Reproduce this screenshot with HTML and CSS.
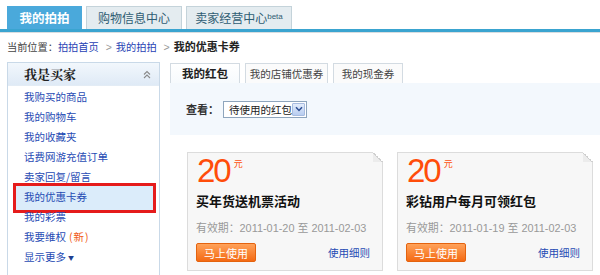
FILE: index.html
```html
<!DOCTYPE html>
<html lang="zh">
<head>
<meta charset="utf-8">
<link rel="stylesheet" href="styles.css">
</head>
<body>
<div class="nav">
  <a class="nav-tab active">我的拍拍</a>
  <a class="nav-tab">购物信息中心</a>
  <a class="nav-tab">卖家经营中心<sup>beta</sup></a>
</div>
<div class="crumb">当前位置：<a>拍拍首页</a><span class="gt">&gt;</span><a>我的拍拍</a><span class="gt">&gt;</span><b>我的优惠卡券</b></div>
<div class="main">
  <div class="side">
    <div class="side-head"><span>我是买家</span><svg class="fold" width="8" height="9" viewBox="0 0 8 9"><path d="M1 4.5 L4 1.5 L7 4.5 M1 8 L4 5 L7 8" fill="none" stroke="#8a8a8a" stroke-width="1.1"/></svg></div>
    <ul class="side-list">
      <li><a>我购买的商品</a></li>
      <li><a>我的购物车</a></li>
      <li><a>我的收藏夹</a></li>
      <li><a>话费网游充值订单</a></li>
      <li><a>卖家回复/留言</a></li>
      <li class="cur"><a>我的优惠卡券</a></li>
      <li><a>我的彩票</a></li>
      <li><a>我要维权</a><span class="new">(新)</span></li>
      <li><a>显示更多</a><span class="tri">▼</span></li>
    </ul>
  </div>
  <div class="content">
    <div class="tabs">
      <span class="tab on">我的红包</span>
      <span class="tab">我的店铺优惠券</span>
      <span class="tab">我的现金券</span>
    </div>
    <div class="filter">
      <span class="label">查看：</span>
      <span class="select"><span class="sel-text">待使用的红包</span><span class="arrow"><svg width="8" height="6" viewBox="0 0 8 6"><path d="M1 1.2 L4 4.4 L7 1.2" fill="none" stroke="#2d4f93" stroke-width="1.5"/></svg></span></span>
    </div>
    <div class="cards">
      <div class="card">
        <div class="amount">20<span class="yuan">元</span></div>
        <div class="title">买年货送机票活动</div>
        <div class="date">有效期：2011-01-20 至 2011-02-03</div>
        <div class="actions"><span class="btn">马上使用</span><a class="rule">使用细则</a></div>
      </div>
      <div class="card">
        <div class="amount">20<span class="yuan">元</span></div>
        <div class="title">彩钻用户每月可领红包</div>
        <div class="date">有效期：2011-01-19 至 2011-02-03</div>
        <div class="actions"><span class="btn">马上使用</span><a class="rule">使用细则</a></div>
      </div>
    </div>
  </div>
</div>
</body>
</html>
```
FILE: styles.css
```css
* { box-sizing: border-box; }
html, body { margin: 0; padding: 0; background: #fff; }
body {
  width: 600px; height: 275px; overflow: hidden;
  font-family: "Noto Sans CJK SC", "Liberation Sans", sans-serif;
  font-size: 10.5px; line-height: 16px; color: #333;
}
a { color: #1f4bb4; text-decoration: none; }

.nav {
  display: flex; gap: 4px; padding: 6px 0 0 7px; height: 32px;
  border-bottom: 3px solid #3aa4d0;
  box-shadow: 0 1px 0 #d8dde0;
}
.nav-tab {
  height: 23px; line-height: 22px; text-align: center;
  background: #e4ecf0; border: 1px solid #c4d3da; border-bottom: 0;
  color: #2f5d73; font-size: 12px; white-space: nowrap;
}
.nav-tab:nth-child(1) { width: 75px; }
.nav-tab:nth-child(2) { width: 96px; }
.nav-tab:nth-child(3) { width: 106px; }
.nav-tab.active {
  background: #4aa9db; border-color: #4aa9db; color: #fff; font-weight: bold; font-size: 12.5px;
}
.nav-tab sup {
  font-size: 8px; font-family: "Liberation Sans", sans-serif; vertical-align: 4px; line-height: 0;
}

.crumb { padding: 6px 0 0 7px; height: 30px; color: #444; white-space: nowrap; font-size: 10.2px; }
.crumb a { color: #1f3fb4; }
.crumb .gt { color: #999; padding: 0 4px 0 7px; font-family: "Liberation Sans", sans-serif; font-size: 10.5px; }
.crumb b { color: #222; font-size: 11px; }

.main { display: flex; padding-left: 7px; gap: 10px; }

.side { width: 153px; height: 213px; border: 1px solid #c9d9e8; border-bottom: 0; }
.side-head {
  height: 23px; display: flex; justify-content: space-between; align-items: center;
  padding: 0 8px 0 16px;
  background: linear-gradient(#f2f7fc, #dfeaf6);
  border-bottom: 1px solid #e3ecf5;
  font-size: 13px; font-weight: bold; color: #222;
  font-family: "Noto Serif CJK SC", "Noto Sans CJK SC", serif;
}
.side-list { list-style: none; margin: 1px 0 0; padding: 0; }
.side-list li { height: 20px; line-height: 20px; padding-left: 16px; position: relative; white-space: nowrap; }
.side-list li.cur::before {
  content: ""; position: absolute; left: 5px; right: 3px; top: -4px; bottom: -6px;
  border: 3px solid #e51b1b; background: #dbecfa; z-index: -1;
}
.side-list li.cur { z-index: 0; }
.new { color: #f05a14; margin-left: 3px; letter-spacing: 1px; }
.tri { font-size: 6px; color: #1f3f90; margin-left: 2px; vertical-align: 1px; }

.content { flex: 1; }
.tabs { display: flex; gap: 5px; height: 21px; padding-top: 1px; }
.tab {
  height: 20px; line-height: 19px; text-align: center; white-space: nowrap;
  border: 1px solid #d3dbe2; border-bottom: 0; background: #fbfbfb; color: #444;
}
.tab:nth-child(1) { width: 70px; }
.tab:nth-child(2) { width: 83px; }
.tab:nth-child(3) { width: 70px; }
.tab.on { background: linear-gradient(#fff, #f6fafd); font-weight: bold; font-size: 11.5px; color: #222; }

.filter {
  background: #f3f8fd; height: 52px; display: flex; align-items: center; padding: 0 0 0 16px;
}
.label { font-weight: bold; color: #333; margin-right: 4px; font-size: 11px; }
.select {
  display: flex; align-items: center; justify-content: space-between;
  height: 17px; width: 84px; padding: 0 1px 0 5px;
  border: 1px solid #8ea5bd; background: #fff; color: #222; white-space: nowrap;
}
.sel-text { line-height: 15px; }
.arrow {
  width: 14px; height: 13px; display: flex; align-items: center; justify-content: center;
  background: linear-gradient(#e3ecfb, #b8cdf0); border: 1px solid #a7bce0; border-radius: 1px;
}

.cards { display: flex; gap: 14px; padding: 17px 0 0 17px; }
.card {
  width: 196px; height: 119px; background: #f7f7f7; border: 1px solid #dcdcdc;
  padding: 2px 12px 0 8px; position: relative;
}
.card::after {
  content: ""; position: absolute; right: -1px; top: -1px; width: 10px; height: 10px;
  background: linear-gradient(to bottom left, #fff 0 50%, #cfcfcf 50% calc(50% + 1px), #ececec calc(50% + 1px));
}
.amount {
  color: #ff4d0a; font-size: 33px; line-height: 32px; height: 32px; padding-left: 1px;
  font-family: "Liberation Sans", Arial, sans-serif; letter-spacing: -2px;
}
.yuan {
  font-size: 9px; vertical-align: 15px; font-family: "Noto Sans CJK SC", sans-serif;
  margin-left: 4px; letter-spacing: 0; line-height: 0;
}
.title { font-weight: bold; font-size: 13px; line-height: 18px; color: #111; margin-top: 5px; white-space: nowrap; }
.date { color: #999; margin-top: 10px; line-height: 16px; font-size: 10.9px; white-space: nowrap; font-family: "Liberation Sans", "Noto Sans CJK SC", sans-serif; }
.actions { display: flex; justify-content: space-between; align-items: center; margin-top: 7px; }
.btn {
  width: 60px; height: 19px; line-height: 18px; text-align: center; color: #fff; font-size: 11px;
  background: linear-gradient(#ffa25a, #f46a14); border: 1px solid #e4630f; border-radius: 2px;
}
.rule { color: #1f4bb4; font-size: 10.5px; }
```
